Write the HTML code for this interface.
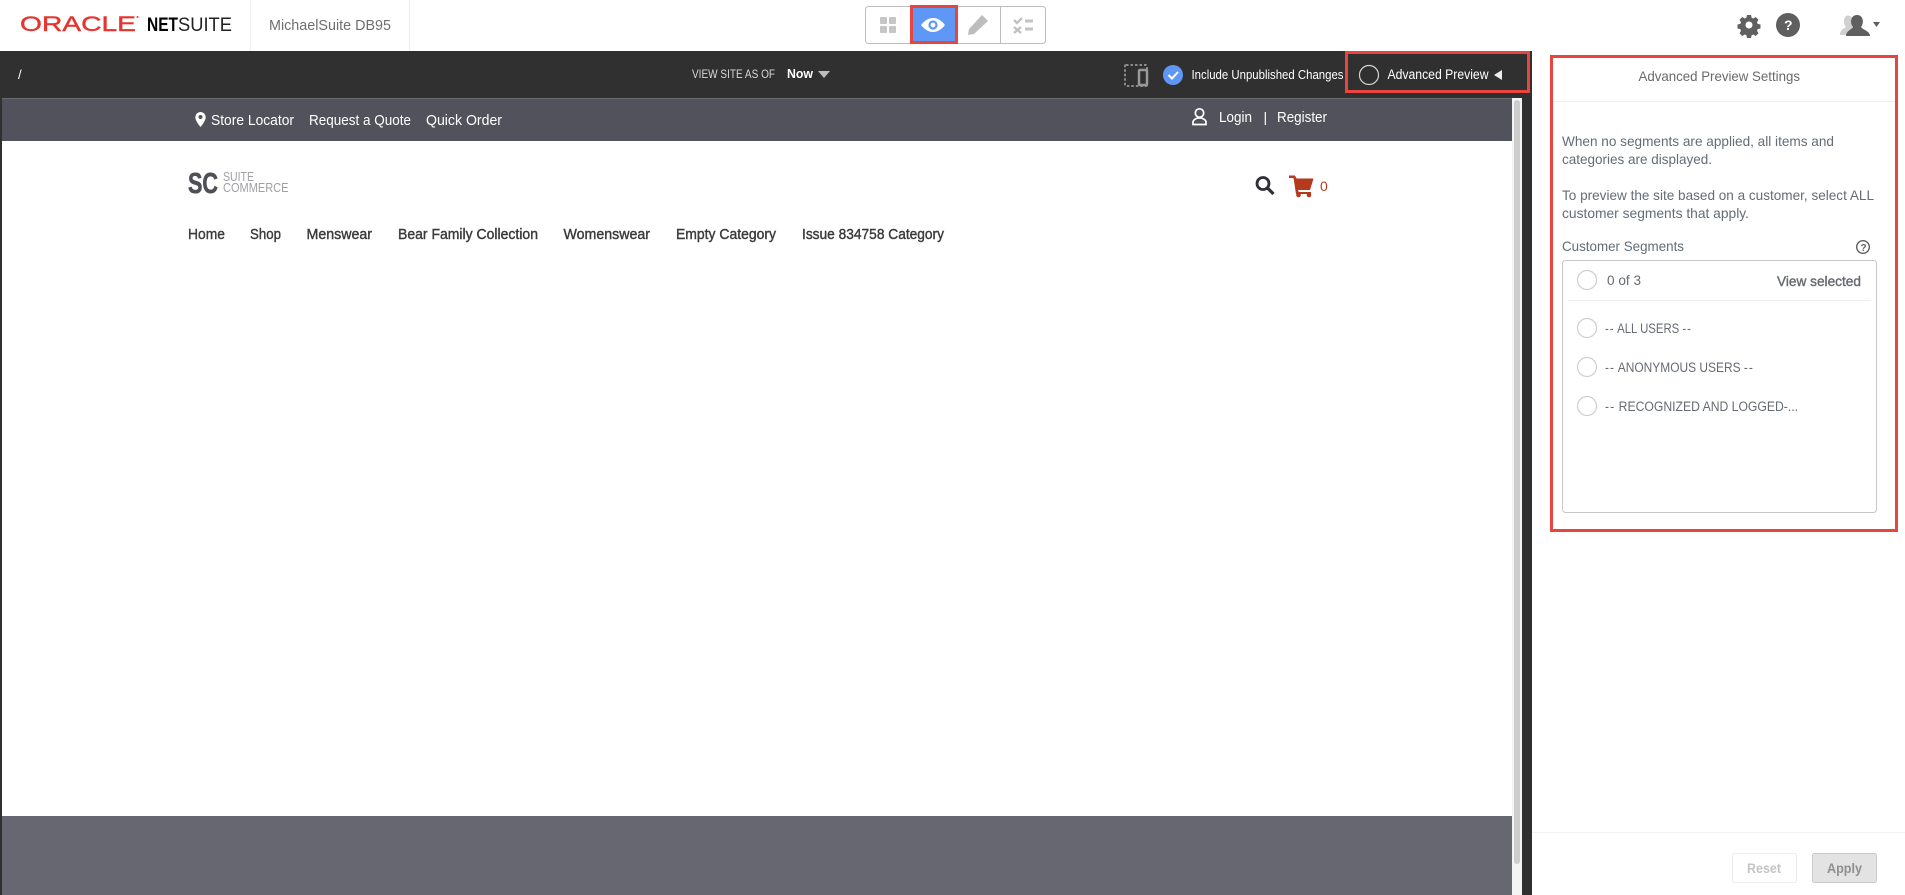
<!DOCTYPE html>
<html lang="en"><head><meta charset="utf-8"><title>Advanced Preview Settings</title>
<style>
html,body{margin:0;padding:0;width:1905px;height:895px;overflow:hidden;background:#fff}
svg{display:block;position:absolute;left:0;top:0}
text{white-space:pre}
.l{font-family:"Liberation Sans",sans-serif}
</style></head><body>
<svg width="1905" height="895" viewBox="0 0 1905 895" xmlns="http://www.w3.org/2000/svg">
<!-- top bar -->
<rect x="0" y="0" width="1905" height="51" fill="#fff"/>
<text class="l" x="20" y="31" font-size="21" fill="#e5352f" stroke="#e5352f" stroke-width=".4" textLength="116" lengthAdjust="spacingAndGlyphs">ORACLE</text>
<circle cx="137.500" cy="17" r="1" fill="#e5352f"/>
<text class="l" x="147" y="31" font-size="19.500" font-weight="700" fill="#000" textLength="31" lengthAdjust="spacingAndGlyphs">NET</text>
<text class="l" x="178" y="31" font-size="19.500" fill="#222" textLength="54" lengthAdjust="spacingAndGlyphs">SUITE</text>
<rect x="250" y="0" width="1" height="51" fill="#eee"/>
<rect x="409" y="0" width="1" height="51" fill="#eee"/>
<text class="l" x="269" y="30" font-size="14.500" fill="#6f6f6f" textLength="122" lengthAdjust="spacingAndGlyphs">MichaelSuite DB95</text>
<!-- mode buttons -->
<rect x="865.500" y="6.500" width="180" height="37" rx="3" fill="#fff" stroke="#bdbdbd"/>
<rect x="1000" y="7" width="1" height="36" fill="#bdbdbd"/>
<g fill="#c6c6c6"><rect x="880" y="17" width="7" height="7" rx="1"/><rect x="889" y="17" width="7" height="7" rx="1"/><rect x="880" y="26" width="7" height="7" rx="1"/><rect x="889" y="26" width="7" height="7" rx="1"/></g>
<rect x="911.500" y="6.500" width="45" height="36" fill="#5e97f6" stroke="#e8453f" stroke-width="3"/>
<path d="M921 25C925 20 929 18 933 18C937 18 941 20 945 25C941 30 937 32 933 32C929 32 925 30 921 25Z" fill="#fff"/>
<circle cx="933" cy="25" r="3.500" fill="none" stroke="#5e97f6" stroke-width="2.200"/>
<path d="M982 15L988 21L974 34L968 35L969 29Z" fill="#bdbdbd"/>
<g fill="none" stroke="#c2c2c2" stroke-width="2.400"><path d="M1014 20L1017 23L1022 18"/><path d="M1014 27L1021 33M1021 27L1014 33"/><path d="M1025 21H1033M1025 29H1033" stroke-width="3"/></g>
<!-- right icons -->
<g fill="#5f5f5f"><path fill-rule="evenodd" d="M1747 15h4l.6 2.800 1.700.7 2.400-1.500 2.800 2.800-1.500 2.400.7 1.700 2.800.6v4l-2.800.6-.7 1.700 1.500 2.400-2.800 2.800-2.400-1.500-1.700.7-.6 2.800h-4l-.6-2.800-1.700-.7-2.400 1.500-2.800-2.800 1.500-2.400-.7-1.700-2.800-.6v-4l2.800-.6.7-1.700-1.500-2.400 2.800-2.800 2.400 1.500 1.700-.7zM1749 21.500a3.500 3.500 0 1 0 .01 0z"/><circle cx="1788" cy="25" r="12"/></g>
<text class="l" x="1784" y="30" font-size="14" font-weight="700" fill="#fff">?</text>
<path d="M1840 35C1840 30 1843 29 1846 27C1843 24 1843 16 1848 15.500C1852 15.500 1854 20 1852 26L1852 35Z" fill="#d0d0d0"/>
<path d="M1846 36C1846 31 1851 30 1853 27C1850 24 1850 15 1857 15C1864 15 1864 24 1861 27C1863 30 1870 31 1870 36Z" fill="#5f5f5f"/>
<path d="M1873 22H1880L1876.500 27Z" fill="#5f5f5f"/>
<!-- dark preview bar -->
<rect x="0" y="51" width="1532" height="844" fill="#303030"/>
<text class="l" x="18" y="79" font-size="13" fill="#fff">/</text>
<text class="l" x="692" y="78" font-size="11.500" fill="#d8d8d8" textLength="83" lengthAdjust="spacingAndGlyphs">VIEW SITE AS OF</text>
<text class="l" x="787" y="78" font-size="13" font-weight="700" fill="#fff" textLength="26" lengthAdjust="spacingAndGlyphs">Now</text>
<path d="M818 71H830L824 78Z" fill="#bdbdbd"/>
<g fill="none" stroke="#8a8a8a" stroke-width="2"><rect x="1125" y="65" width="22" height="21" rx="1" stroke-dasharray="2.500 2"/><rect x="1139" y="70" width="8" height="15" rx="1" stroke-width="2.500" stroke="#999"/></g>
<circle cx="1173" cy="75" r="10" fill="#5e97f6"/>
<path d="M1168.500 75L1172 78.500L1178 72" fill="none" stroke="#fff" stroke-width="2"/>
<text class="l" x="1191.500" y="79" font-size="12.500" fill="#fff" textLength="152" lengthAdjust="spacingAndGlyphs">Include Unpublished Changes</text>
<rect x="1346.500" y="52.500" width="182" height="39" fill="none" stroke="#e8453f" stroke-width="3"/>
<circle cx="1369" cy="75" r="9.500" fill="none" stroke="#d5d5d5" stroke-width="1.200"/>
<text class="l" x="1387.500" y="79" font-size="13.500" fill="#fff" textLength="101" lengthAdjust="spacingAndGlyphs">Advanced Preview</text>
<path d="M1502 70V80L1494 75Z" fill="#eee"/>
<!-- site frame -->
<path d="M2 895V101a3 3 0 0 1 3-3H1519a3 3 0 0 1 3 3V895Z" fill="#fff"/>
<path d="M2 141V100a2 2 0 0 1 2-2H1512V141Z" fill="#52525c"/>
<rect x="2" y="98" width="1510" height="1" fill="#6a6a6f"/>
<rect x="1512" y="98" width="10" height="797" fill="#f4f4f4"/>
<rect x="1514" y="100" width="6" height="764" rx="3" fill="#cdcdcd"/>
<rect x="2" y="816" width="1510" height="79" fill="#676771"/>
<path d="M200.500 112a5.200 5.200 0 0 1 5.200 5.200C205.700 121 200.500 127 200.500 127C200.500 127 195.300 121 195.300 117.200A5.200 5.200 0 0 1 200.500 112Z" fill="#fff"/><circle cx="200.500" cy="117" r="2" fill="#52525c"/>
<g class="l" font-size="14.500" fill="#fff">
<text x="211" y="125" textLength="83" lengthAdjust="spacingAndGlyphs">Store Locator</text>
<text x="309" y="125" textLength="102" lengthAdjust="spacingAndGlyphs">Request a Quote</text>
<text x="426" y="125" textLength="76" lengthAdjust="spacingAndGlyphs">Quick Order</text>
<text x="1219" y="122" textLength="33" lengthAdjust="spacingAndGlyphs">Login</text>
<text x="1263.500" y="122" font-size="14">|</text>
<text x="1277" y="122" textLength="50" lengthAdjust="spacingAndGlyphs">Register</text>
</g>
<g fill="none" stroke="#fff" stroke-width="1.700"><circle cx="1199.500" cy="113" r="4.200"/><path d="M1193 124.500V122C1193 119.500 1196 118.800 1197.500 118H1201.500C1203 118.800 1206 119.500 1206 122V124.500Z"/></g>
<text class="l" x="188" y="193" font-size="29" font-weight="700" fill="#4f4f57" stroke="#4f4f57" stroke-width=".6" textLength="30" lengthAdjust="spacingAndGlyphs">SC</text>
<text class="l" x="223" y="181" font-size="12.500" fill="#a0a0a4" textLength="31" lengthAdjust="spacingAndGlyphs">SUITE</text>
<text class="l" x="223" y="192" font-size="12.500" fill="#a0a0a4" textLength="65.500" lengthAdjust="spacingAndGlyphs">COMMERCE</text>
<circle cx="1263" cy="183.500" r="6" fill="none" stroke="#2f2f35" stroke-width="2.800"/>
<path d="M1267.500 188L1273.500 194" stroke="#2f2f35" stroke-width="3.200"/>
<path d="M1289 175.500H1295L1296.500 178.500H1313.500L1310 190H1298L1298.800 192H1311V194H1296L1293.500 178H1289Z" fill="#b5391c"/>
<circle cx="1298.500" cy="195" r="2.300" fill="#b5391c"/><circle cx="1309" cy="195" r="2.300" fill="#b5391c"/>
<text class="l" x="1320" y="191" font-size="14" fill="#b5391c" textLength="7">0</text>
<g class="l" font-size="14.500" fill="#3d3a3a" stroke="#3d3a3a" stroke-width=".4">
<text x="188" y="239" textLength="37" lengthAdjust="spacingAndGlyphs">Home</text>
<text x="250" y="239" textLength="31" lengthAdjust="spacingAndGlyphs">Shop</text>
<text x="306.500" y="239" textLength="65.500" lengthAdjust="spacingAndGlyphs">Menswear</text>
<text x="398" y="239" textLength="140" lengthAdjust="spacingAndGlyphs">Bear Family Collection</text>
<text x="563.500" y="239" textLength="86.500" lengthAdjust="spacingAndGlyphs">Womenswear</text>
<text x="676" y="239" textLength="100" lengthAdjust="spacingAndGlyphs">Empty Category</text>
<text x="802" y="239" textLength="142" lengthAdjust="spacingAndGlyphs">Issue 834758 Category</text>
</g>
<!-- settings panel -->
<rect x="1532" y="51" width="373" height="844" fill="#fff"/>
<rect x="1551.500" y="56.500" width="345" height="474" fill="none" stroke="#e8453f" stroke-width="3"/>
<rect x="1553" y="101" width="342" height="1" fill="#f0f0f0"/>
<text class="l" x="1638.500" y="81" font-size="14" fill="#6a6a6a" textLength="161.500" lengthAdjust="spacingAndGlyphs">Advanced Preview Settings</text>
<g class="l" font-size="14" fill="#626d77">
<text x="1562" y="146" textLength="272" lengthAdjust="spacingAndGlyphs">When no segments are applied, all items and</text>
<text x="1562" y="164" textLength="150" lengthAdjust="spacingAndGlyphs">categories are displayed.</text>
<text x="1562" y="200" textLength="312" lengthAdjust="spacingAndGlyphs">To preview the site based on a customer, select ALL</text>
<text x="1562" y="218" textLength="187" lengthAdjust="spacingAndGlyphs">customer segments that apply.</text>
<text x="1562" y="251" textLength="122" lengthAdjust="spacingAndGlyphs">Customer Segments</text>
</g>
<circle cx="1863" cy="247" r="6.300" fill="none" stroke="#5f5f5f" stroke-width="1.400"/>
<text class="l" x="1860.500" y="251" font-size="10" font-weight="700" fill="#5f5f5f">?</text>
<rect x="1562.500" y="260.500" width="314" height="252" rx="3" fill="#fff" stroke="#c8c8c8"/>
<rect x="1568" y="300" width="303" height="1" fill="#eee"/>
<g fill="#fff" stroke="#cfcfcf" stroke-width="1.200"><circle cx="1587" cy="280" r="9.500"/><circle cx="1587" cy="328" r="9.500"/><circle cx="1587" cy="367" r="9.500"/><circle cx="1587" cy="406" r="9.500"/></g>
<g class="l" font-size="13.500" fill="#666b72">
<text x="1607" y="285" textLength="34" lengthAdjust="spacingAndGlyphs">0 of 3</text>
<text x="1605" y="333" textLength="87" lengthAdjust="spacingAndGlyphs"><tspan letter-spacing="1.200">--</tspan> ALL USERS <tspan letter-spacing="1.200">--</tspan></text>
<text x="1605" y="372" textLength="149" lengthAdjust="spacingAndGlyphs"><tspan letter-spacing="1.200">--</tspan> ANONYMOUS USERS <tspan letter-spacing="1.200">--</tspan></text>
<text x="1605" y="411" textLength="193" lengthAdjust="spacingAndGlyphs"><tspan letter-spacing="1.200">--</tspan> RECOGNIZED AND LOGGED-...</text>
</g>
<text class="l" x="1777" y="286" font-size="14" fill="#666b72" stroke="#666b72" stroke-width=".4" textLength="84" lengthAdjust="spacingAndGlyphs">View selected</text>
<rect x="1532" y="832" width="373" height="1" fill="#f1f1f1"/>
<rect x="1732.500" y="853.500" width="64" height="29" rx="2" fill="#fff" stroke="#ececec"/>
<text class="l" x="1747" y="873" font-size="13.500" font-weight="700" fill="#c4c4c4" textLength="34" lengthAdjust="spacingAndGlyphs">Reset</text>
<rect x="1812.500" y="853.500" width="64" height="29" rx="2" fill="#e3e3e3" stroke="#cbcbcb"/>
<text class="l" x="1827" y="873" font-size="13.500" font-weight="700" fill="#8f8f8f" textLength="35" lengthAdjust="spacingAndGlyphs">Apply</text>
</svg>
</body></html>
